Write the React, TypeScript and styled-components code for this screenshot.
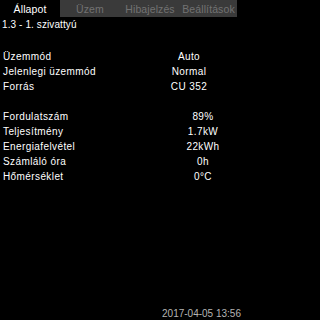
import React from 'react';
import styled, { createGlobalStyle } from 'styled-components';

const GlobalStyle = createGlobalStyle`
  html, body {
    margin: 0;
    padding: 0;
    background: #000;
  }
  body {
    font-family: "Liberation Sans", Arial, sans-serif;
    color: #fff;
  }
`;

interface IRow {
  label: string;
  value: string;
}

const modeRows: IRow[] = [
  { label: 'Üzemmód', value: 'Auto' },
  { label: 'Jelenlegi üzemmód', value: 'Normal' },
  { label: 'Forrás', value: 'CU 352' },
];

const measureRows: IRow[] = [
  { label: 'Fordulatszám', value: '89%' },
  { label: 'Teljesítmény', value: '1.7kW' },
  { label: 'Energiafelvétel', value: '22kWh' },
  { label: 'Számláló óra', value: '0h' },
  { label: 'Hőmérséklet', value: '0°C' },
];

const tabs = ['Állapot', 'Üzem', 'Hibajelzés', 'Beállítások'];

const App = () => {
  return (
    <>
      <GlobalStyle />
      <Screen>
        <TabBar>
          {tabs.map((tab, i) => (
            <Tab key={tab} $active={i === 0}>{tab}</Tab>
          ))}
        </TabBar>
        <Title>1.3 - 1. szivattyú</Title>
        <Group $labelWidth={147} $gap={17}>
          {modeRows.map(row => (
            <React.Fragment key={row.label}>
              <Label>{row.label}</Label>
              <Value>{row.value}</Value>
            </React.Fragment>
          ))}
        </Group>
        <Group $labelWidth={161} $gap={15}>
          {measureRows.map(row => (
            <React.Fragment key={row.label}>
              <Label>{row.label}</Label>
              <Value>{row.value}</Value>
            </React.Fragment>
          ))}
        </Group>
        <Footer>2017-04-05 13:56</Footer>
      </Screen>
    </>
  );
};

export default App;

const Screen = styled.div`
  width: 242px;
  height: 320px;
  display: flex;
  flex-direction: column;
  background: #000;
  overflow: hidden;
`;

const TabBar = styled.div`
  display: grid;
  grid-template-columns: 60px 60px 60px 57px;
  height: 17px;
`;

const Tab = styled.div<{ $active?: boolean }>`
  display: flex;
  align-items: center;
  justify-content: center;
  font-size: 10.5px;
  letter-spacing: 0.1px;
  background: ${p => (p.$active ? '#000' : '#3a3a3a')};
  color: ${p => (p.$active ? '#fff' : '#727272')};
`;

const Title = styled.div`
  font-size: 10px;
  line-height: 15px;
  padding-left: 2px;
  letter-spacing: 0.1px;
`;

const Group = styled.div<{ $labelWidth: number; $gap: number }>`
  display: grid;
  grid-template-columns: ${p => p.$labelWidth}px 78px;
  grid-auto-rows: 15px;
  margin-top: ${p => p.$gap}px;
  padding-left: 3px;
  font-size: 10px;
  letter-spacing: 0.4px;
`;

const Label = styled.div`
  line-height: 15px;
  white-space: nowrap;
`;

const Value = styled.div`
  line-height: 15px;
  text-align: center;
  white-space: nowrap;
`;

const Footer = styled.div`
  margin-top: auto;
  align-self: flex-end;
  padding-right: 1px;
  font-size: 10px;
  line-height: 12px;
  color: #b4b4b4;
`;
